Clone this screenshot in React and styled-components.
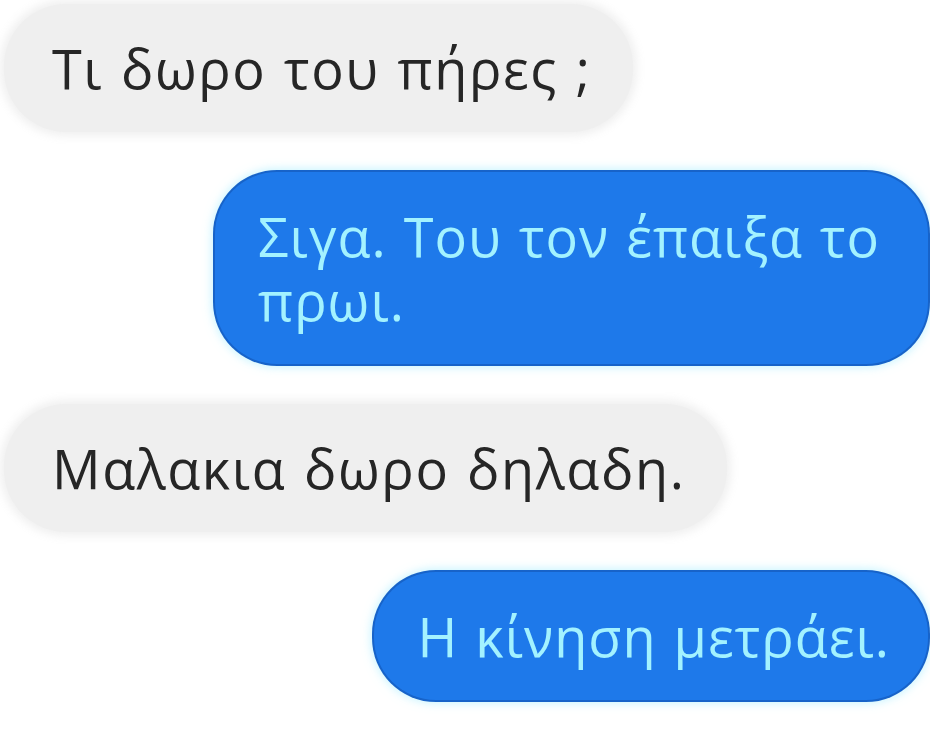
import React from 'react';
import styled, { createGlobalStyle } from 'styled-components';

const Global = createGlobalStyle`
  body {
    margin: 0;
    background: #ffffff;
    font-family: "Open Sans", "Noto Sans", "DejaVu Sans", sans-serif;
  }
`;

const Thread = styled.div`
  width: 930px;
  height: 735px;
  overflow: hidden;
  display: flex;
  flex-direction: column;
  gap: 40px;
  padding: 4px 2px 0 4px;
  box-sizing: border-box;
`;

const Bubble = styled.div`
  align-self: ${(p) => (p.$mine ? 'flex-end' : 'flex-start')};
  max-width: ${(p) => (p.$mine ? '713px' : '820px')};
  box-sizing: border-box;
  padding: ${(p) => (p.$mine ? '32px 38px 32px 43px' : '32px 42px 32px 48px')};
  border-radius: 62px;
  font-size: 54px;
  line-height: 64px;
  letter-spacing: ${(p) => (p.$mine ? '1px' : '1.6px')};
  word-spacing: 2px;
  background: ${(p) => (p.$mine ? '#1e79ea' : '#efefef')};
  color: ${(p) => (p.$mine ? '#a3f2ff' : '#262626')};
  box-shadow: ${(p) =>
    p.$mine
      ? '0 0 0 2px #1763c9, 0 0 10px 3px rgba(150, 235, 255, 0.55)'
      : '0 0 8px 4px rgba(238, 238, 238, 0.9)'};
`;

const messages = [
  { text: 'Τι δωρο του πήρες ;', mine: false },
  { text: 'Σιγα. Του τον έπαιξα το πρωι.', mine: true },
  { text: 'Μαλακια δωρο δηλαδη.', mine: false },
  { text: 'Η κίνηση μετράει.', mine: true },
];

export default function App() {
  return (
    <>
      <Global />
      <Thread>
        {messages.map((m, i) => (
          <Bubble key={i} $mine={m.mine}>
            {m.text}
          </Bubble>
        ))}
      </Thread>
    </>
  );
}
